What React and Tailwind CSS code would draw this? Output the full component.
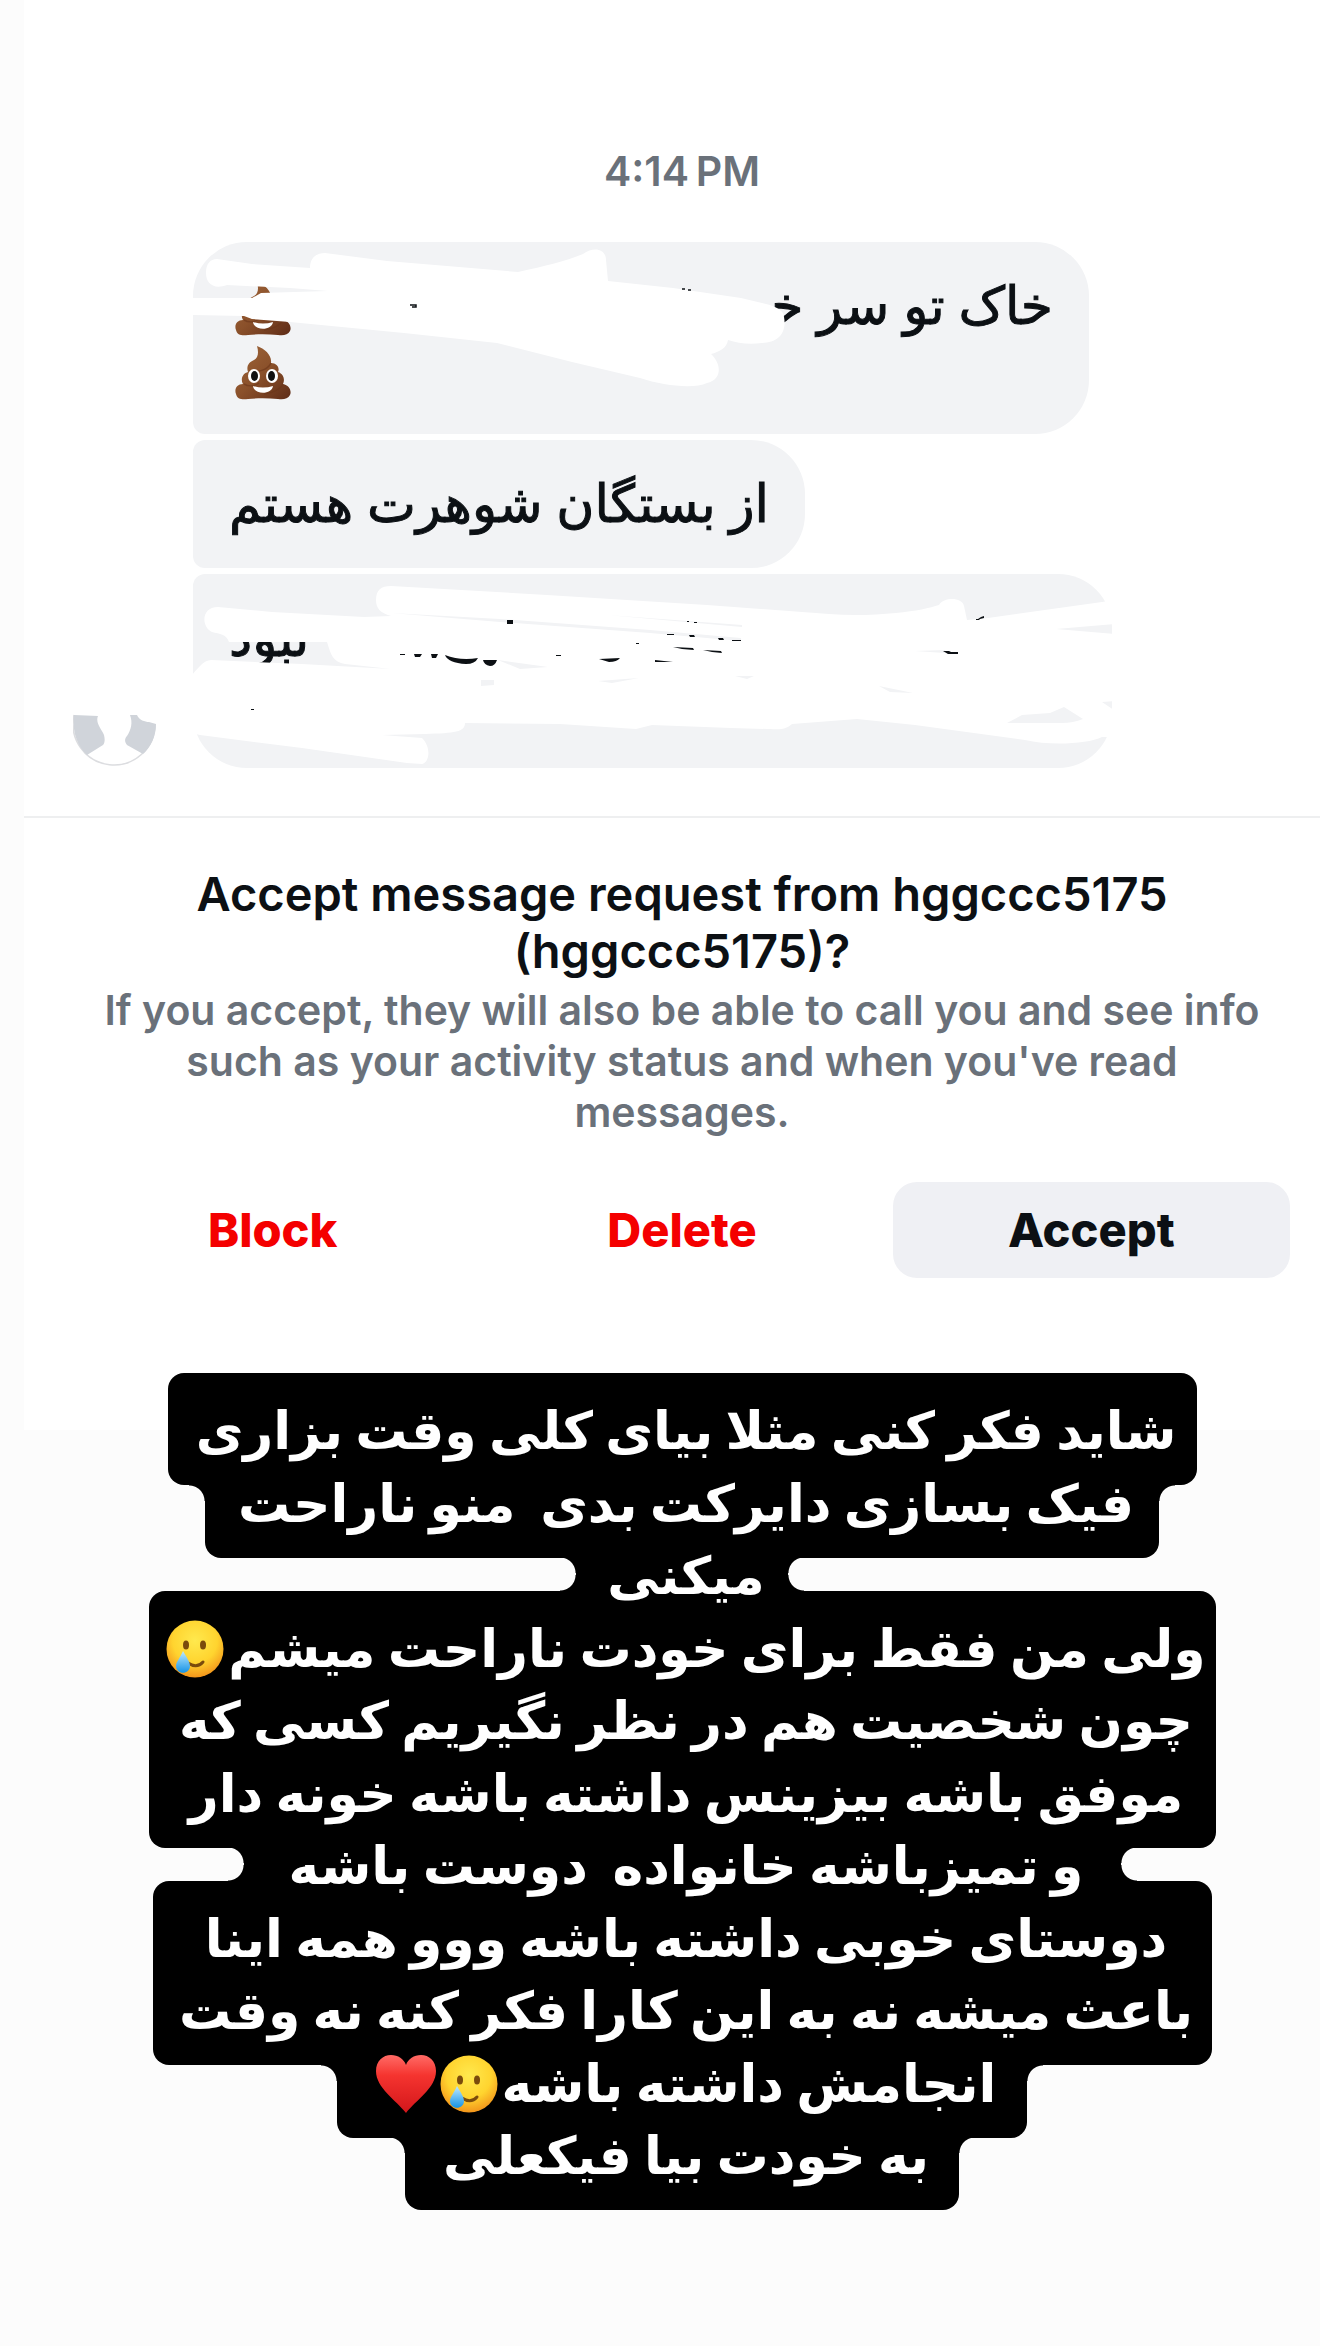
import React from 'react';

const captionLines = [
    { text: 'شاید فکر کنی مثلا بیای کلی وقت بزاری', width: 'w-[1029px]' },
    { text: 'فیک بسازی دایرکت بدی \u00a0منو ناراحت', width: 'w-[954px]', top: true },
    { text: 'میکنی', width: 'w-[212px]', top: true, bottom: true },
    { text: 'ولی من فقط برای خودت ناراحت میشم', width: 'w-[1067px]', emojis: ['tear'] },
    { text: 'چون شخصیت هم در نظر نگیریم کسی که', width: 'w-[1067px]' },
    { text: 'موفق باشه بیزینس داشته باشه خونه دار', width: 'w-[1067px]' },
    { text: 'و تمیزباشه خانواده \u00a0دوست باشه', width: 'w-[877px]', top: true, bottom: true },
    { text: 'دوستای خوبی داشته باشه ووو همه اینا', width: 'w-[1059px]' },
    { text: 'باعث میشه نه به این کارا فکر کنه نه وقت', width: 'w-[1059px]' },
    { text: 'انجامش داشته باشه', width: 'w-[690px]', top: true, emojis: ['tear', 'heart'] },
    { text: 'به خودت بیا فیکعلی', width: 'w-[554px]', top: true },
];

const Poop = () => (
    <svg viewBox="0 0 56 54" className="w-14 h-[54px] mt-1.5 ml-1.5 shrink-0" role="img" aria-label="💩">
        <defs>
            <linearGradient id="poop" x1="0" y1="0" x2="1" y2="1">
                <stop offset="0" stopColor="#a0673b" />
                <stop offset="0.5" stopColor="#8a502a" />
                <stop offset="1" stopColor="#5f2c17" />
            </linearGradient>
        </defs>
        <path
            d="M22 0C30 3 37 9 36 17C42 17 45 22 43 26C49 28 50 34 48 38C54 39 57 45 55 49C53 53 48 54 43 53C33 52 22 52 13 53C7 54 2 53 1 48C-1 43 2 38 8 38C5 33 8 27 13 26C11 20 14 16 19 14C23 12 24 7 22 0Z"
            fill="url(#poop)"
        />
        <path d="M14 25C22 27 33 24 36 17M9 38C14 41 20 40 24 37M29 48C37 47 45 44 48 38" fill="none" stroke="#6b3519" strokeWidth="1.5" opacity="0.6" />
        <ellipse cx="19" cy="30" rx="6" ry="7" fill="#fff" />
        <ellipse cx="37" cy="30" rx="6" ry="7" fill="#fff" />
        <ellipse cx="19.500" cy="30" rx="3.500" ry="5" fill="#111" />
        <ellipse cx="36.500" cy="30" rx="3.500" ry="5" fill="#111" />
        <path d="M18 40Q28 43 38 40C37 49 19 49 18 40Z" fill="#fff" />
    </svg>
);

const Tear = () => (
    <svg viewBox="0 0 58 58" className="w-[58px] h-[58px] shrink-0" role="img" aria-label="🥲">
        <defs>
            <radialGradient id="face" cx="0.5" cy="0.35" r="0.65">
                <stop offset="0" stopColor="#ffe94e" />
                <stop offset="0.6" stopColor="#ffd42f" />
                <stop offset="1" stopColor="#f3951b" />
            </radialGradient>
            <linearGradient id="drop" x1="0" y1="0" x2="0" y2="1">
                <stop offset="0" stopColor="#bfeaff" />
                <stop offset="1" stopColor="#1593e6" />
            </linearGradient>
        </defs>
        <circle cx="29" cy="29" r="28.500" fill="url(#face)" />
        <ellipse cx="20" cy="25" rx="3" ry="4.500" fill="#7a4b0c" />
        <ellipse cx="37" cy="25" rx="3" ry="4.500" fill="#7a4b0c" />
        <path d="M22 43Q31 49 37 42" fill="none" stroke="#7a4b0c" strokeWidth="3" strokeLinecap="round" />
        <path d="M17 31C21 38 24 42 24 46C24 55 10 55 10 46C10 42 14 38 17 31Z" fill="url(#drop)" />
    </svg>
);

const Heart = () => (
    <svg viewBox="0 0 60 60" className="w-[60px] h-[60px] shrink-0" role="img" aria-label="❤️">
        <defs>
            <linearGradient id="heart" x1="0" y1="0" x2="0" y2="1">
                <stop offset="0" stopColor="#ff6b66" />
                <stop offset="0.35" stopColor="#f5342f" />
                <stop offset="1" stopColor="#d3161b" />
            </linearGradient>
        </defs>
        <path d="M30 59C20 46 0 34 0 17C0 7 7 1 15 1C22 1 28 5 30 11C32 5 38 1 45 1C53 1 60 7 60 17C60 34 40 46 30 59Z" fill="url(#heart)" />
    </svg>
);

const Avatar = () => (
    <svg viewBox="0 0 84 84" className="w-[84px] h-[84px] shrink-0" role="img" aria-label="Profile picture">
        <path d="M1 31A41 41 0 1 0 82 40" fill="#fff" stroke="#dcdde0" strokeWidth="1.500" />
        <path d="M1 31L25 32C22 39 29 46 31 51C32 55 32 59 30 61L14 71C3 61 -1 45 1 31Z" fill="#d0d4da" />
        <path d="M57 31L64 31C66 36 72 38 76 38L83 40C83 52 78 63 70 70L54 61C51 57 52 54 54 52C58 46 60 39 57 31Z" fill="#d0d4da" />
    </svg>
);

const Bubble = ({ className, children }) => (
    <div dir="rtl" className={`relative bg-[#f2f3f5] px-9 py-8 rounded-r-[54px] text-[52px] leading-[64px] font-medium [-webkit-text-stroke:1px_#0c1014] text-[#0c1014] whitespace-nowrap ${className}`}>
        {children}
    </div>
);

const FirstScribble = () => (
    <svg viewBox="193 242 896 192" className="absolute left-0 top-0 w-[896px] h-48" aria-hidden="true">
        <path
            d="M206 273C206 264 210 259 217 259L252 264L310 268C310 258 316 253 325 253L387 261L518 272C545 266 566 261 583 254C594 246 606 249 606 260L608 281L673 288L741 298L770 305C780 309 784 312 784 317C787 333 778 343 762 343C748 345 738 343 728 340C727 348 719 352 711 354C722 364 722 380 707 383C694 389 664 386 640 378L572 362L497 343L404 333L290 322L252 319L244 316L192 315V298H252L261 293L328 291L290 288L227 285C213 290 206 283 206 273Z"
            fill="#fff"
        />
        <path d="M410 305h6v2h-4M682 289h3M688 290h3" fill="none" stroke="#0c1014" strokeWidth="1.500" />
    </svg>
);

const SecondScribble = () => (
    <svg viewBox="193 574 919 194" className="absolute left-0 top-0 w-[919px] h-[194px]" aria-hidden="true">
        <path
            d="M376 600C376 590 381 586 391 586L547 595L707 605L829 614C852 616 875 615 896 613C916 611 930 608 939 605C944 597 962 597 964 606L967 620L988 618L1102 602L1114 600V624L1056 629L1114 634V701L1102 702L1114 710V737H1102C1088 744 1050 746 1025 740L915 725L857 719L792 724C784 731 778 729 768 729L731 728L652 725L636 729L560 724L465 723C465 732 455 733 425 734L382 735L422 738C432 748 429 763 422 764L407 763L302 748L200 735L191 733V676C200 666 203 661 211 660L302 664L391 669L345 664C333 662 331 655 327 642H229C226 634 220 634 212 632C201 627 201 607 218 607L272 612L364 617L391 616C380 613 376 608 376 600Z"
            fill="#fff"
        />
        <g fill="#f2f3f5">
            <path d="M391 613L500 619L650 630L741 638V641L650 633L500 622Z" />
            <path d="M1064 707L1083 719Q1073 723 1062 723H1007L1022 715L1050 713Z" />
            <path d="M879 686L913 693L890 692ZM481 680H494V685L481 686ZM598 681L639 678L612 683ZM735 676H754L747 679ZM915 651L945 650V653ZM498 660L548 667L520 669Z" />
            <path d="M607 615L742 625V627Z" />
        </g>
        <g fill="#0c1014">
            <path d="M507 620h6v4h-6ZM400 654h5v1h-5ZM414 654h8l-2 3h-5ZM431 654h7l-2 4h-4ZM445 655Q460 661 478 658Q475 664 466 664Q448 663 445 655ZM483 660H497Q495 666 490 666Q484 665 483 660Z" />
            <path d="M556 655h5v1h-5ZM599 659L620 658Q617 662 609 662ZM655 660L673 662H655Z" />
            <path d="M667 634h7v1h-7ZM689 635h5l1 2h-5ZM718 638h5l1 2h-5ZM732 640h9v1h-9ZM636 643h3v1h-3ZM673 647L693 648L694 650L682 649ZM703 650L721 651L722 653L712 652ZM687 621h2v1h-2ZM694 622h3v1h-3Z" />
            <path d="M943 651h6l2 1h7v2h-10ZM976 619h2l3-2 3-1v2l-4 1-1 1h-3ZM251 709h3v1h-3Z" />
        </g>
    </svg>
);

// Rounded inner corners where a narrow line meets a wider one
const Fillets = ({ top, bottom }) => (
    <>
        {top && (
            <>
                <span className="absolute -left-4 top-[39px] size-4 bg-[radial-gradient(circle_at_0_100%,transparent_15px,#000_16px)]" />
                <span className="absolute -right-4 top-[39px] size-4 bg-[radial-gradient(circle_at_100%_100%,transparent_15px,#000_16px)]" />
            </>
        )}
        {bottom && (
            <>
                <span className="absolute -left-4 bottom-[39px] size-4 bg-[radial-gradient(circle_at_0_0,transparent_15px,#000_16px)]" />
                <span className="absolute -right-4 bottom-[39px] size-4 bg-[radial-gradient(circle_at_100%_0,transparent_15px,#000_16px)]" />
            </>
        )}
    </>
);

const Caption = () => (
    <div dir="rtl" className="relative flex flex-col items-center pl-5 -mt-[57px] text-[52px] leading-[72px] font-bold text-white">
        {captionLines.map((line) => (
            <div key={line.text} className={`relative flex justify-center items-center h-28 pt-1 pl-2 bg-black rounded-2xl not-first:even:-mt-[39px] not-first:odd:-mt-10 ${line.width}`}>
                <Fillets top={line.top} bottom={line.bottom} />
                <p className="relative z-10 flex items-center gap-1 whitespace-nowrap">
                    {line.text}
                    {line.emojis?.map((name) => (name === 'heart' ? <Heart key={name} /> : <Tear key={name} />))}
                </p>
            </div>
        ))}
    </div>
);

const App = () => {
    return (
        <div className="min-h-screen bg-[#fcfcfc] pl-6 overflow-hidden font-['Inter','DejaVu_Sans',sans-serif]">
            <section className="bg-white pt-[147px] pb-[152px]">
                <p className="pl-5 text-center text-[41px] leading-[48px] font-semibold text-[#6a717a]">4:14{'\u2009'}PM</p>

                <div className="flex items-end gap-9 pl-[49px] pt-[47px] pb-12">
                    <Avatar />
                    <div className="flex flex-col items-start gap-1.5">
                        <Bubble className="w-[896px] rounded-tl-[54px] rounded-bl-xl">
                            <div className="flex items-center justify-between h-16">
                                <span>خاک تو سر خودت</span>
                                <Poop />
                            </div>
                            <div className="flex items-center justify-end h-16">
                                <Poop />
                            </div>
                            <FirstScribble />
                        </Bubble>
                        <Bubble className="rounded-l-xl">از بستگان شوهرت هستم</Bubble>
                        <Bubble className="w-[919px] h-[194px] rounded-tl-xl rounded-bl-[54px] text-left">
                            نبود
                            <SecondScribble />
                        </Bubble>
                    </div>
                </div>

                <div className="border-t-2 border-[#eeeff0] pt-[47px] pl-[50px] pr-[30px]">
                    <h1 className="text-center text-[47px] leading-[57px] font-semibold text-[#0c1014]">
                        Accept message request from hggccc5175
                        <br />
                        (hggccc5175)?
                    </h1>
                    <p className="pt-1.5 px-4 text-center text-[41px] leading-[51px] font-semibold text-[#6a717a]">
                        If you accept, they will also be able to call you and see info
                        such as your activity status and when you've read messages.
                    </p>
                    <div className="grid grid-cols-3 gap-3 pt-11 text-[47px] font-extrabold">
                        <button type="button" className="h-24 rounded-3xl text-[#f40000]">Block</button>
                        <button type="button" className="h-24 rounded-3xl text-[#f40000]">Delete</button>
                        <button type="button" className="h-24 rounded-3xl bg-[#eff0f4] text-[#0c1014]">Accept</button>
                    </div>
                </div>
            </section>

            <Caption />
        </div>
    );
};

export default App;
